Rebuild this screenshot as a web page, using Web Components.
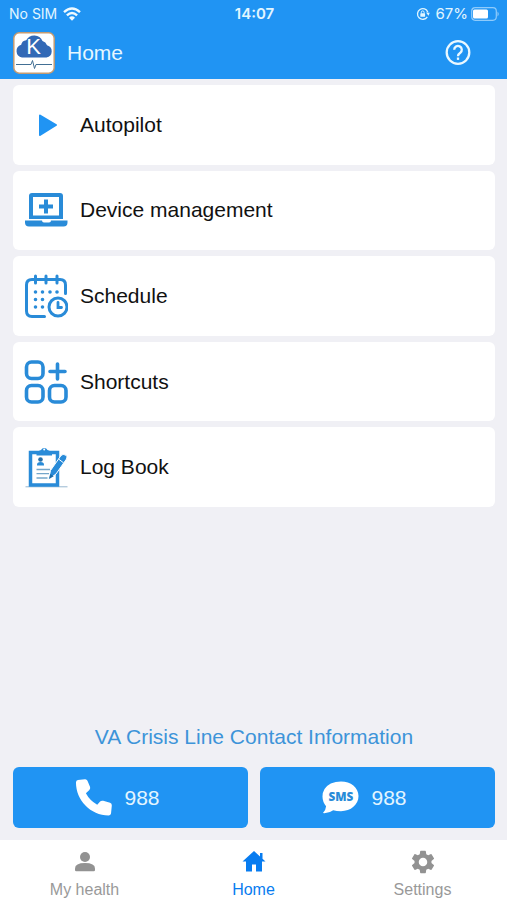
<!DOCTYPE html>
<html lang="en">
<head>
<meta charset="utf-8">
<meta name="viewport" content="width=device-width, initial-scale=1">
<title>Home</title>
<style>
html, body { margin: 0; }
body { font-family: "Liberation Sans", Arial, sans-serif; background: #f0f0f5; color: #111; }
</style>
</head>
<body>
<home-screen></home-screen>
<script>
const define = (name, html) => {
  customElements.define(name, class extends HTMLElement {
    constructor() {
      super();
      this.attachShadow({ mode: 'open' }).innerHTML = html;
    }
  });
};

define('status-bar', `
<style>
  :host { display: grid; grid-template-columns: 1fr auto 1fr; align-items: center; height: 27px; padding: 0 7px 0 9px; font: 15px/18px "Inter", "Liberation Sans", sans-serif; color: #e2f6ff; }
  div { display: flex; align-items: center; }
  .left { gap: 6px; font-size: 14px; }
  .right { justify-content: flex-end; gap: 5px; }
  .battery { gap: 3px; }
  svg { display: block; }
  time { font-weight: 600; }
</style>
<div class="left"><span>No SIM</span>
  <svg width="18" height="14" viewBox="0 0 18 14" fill="none" stroke="#effaff" stroke-width="2.4"><path d="M1 5.2Q9-2 17 5.2M3.9 8.3Q9 3.6 14.1 8.3"/><path d="M9 13.7 6 10.7Q9 8 12 10.7Z" fill="#effaff" stroke="none"/></svg>
</div>
<time>14:07</time>
<div class="right">
  <svg width="14" height="14" viewBox="0 0 14 14" fill="none" stroke="#e2f6ff" stroke-width="1.3"><path d="M11.3 9.8A5.3 5.3 0 1 1 11.8 5.2"/><path d="m10 5.6 3.700.1L12.5 8.8Z" fill="#e2f6ff" stroke="none"/><rect x="4.3" y="6.3" width="4.8" height="3.5" rx=".6" fill="#e2f6ff" stroke="none"/><path d="M5.3 6.5V5.3a1.4 1.4 0 0 1 2.8 0v1.2" stroke-width="1"/></svg>
  <div class="battery"><span>67%</span>
  <svg width="29" height="14" viewBox="0 0 29 14"><rect x=".7" y=".7" width="24.6" height="12.6" rx="3.5" fill="none" stroke="#8fcbfb" stroke-width="1.2"/><rect x="2" y="2.500" width="15" height="9" rx="1.500" fill="#fff"/><path d="M26.500 4.500q2.500 2.500 0 5Z" fill="#8fcbfb"/></svg></div>
</div>`);

define('app-header', `
<style>
  :host { display: flex; align-items: center; height: 52px; padding: 0 36px 0 13px; color: #e6f7ff; }
  h1 { flex: 1; margin: 0 0 0 12px; font-size: 21px; line-height: 24px; font-weight: 400; }
  button { padding: 0; border: 0; background: none; color: inherit; }
  svg { display: block; }
</style>
<svg width="42" height="42" viewBox="0 0 42 42" role="img" aria-label="App logo">
  <rect x=".8" y=".8" width="40.4" height="40.4" rx="5.5" fill="#fff" stroke="#c49b72" stroke-width="1.5"/>
  <path d="M9 25.500a6.600 6.600 0 0 1-.8-12.800 5.500 5.500 0 0 1 5-4.500A9 9 0 0 1 29.500 9a6.500 6.500 0 0 1 4.500 4.200A6.300 6.300 0 0 1 33.500 25.500Z" fill="#3269b6"/>
  <text x="20.5" y="22" text-anchor="middle" font-family="Liberation Sans, sans-serif" font-size="22" fill="#fff">K</text>
  <path d="M3 32.500h15l1.500-4 2 8 1.500-4h16" fill="none" stroke="#426f94" stroke-width="1"/>
</svg>
<h1>Home</h1>
<button type="button" aria-label="Help"><svg width="26" height="26" viewBox="0 0 26 26" fill="none" stroke="#eaf8ff" stroke-width="2.3"><circle cx="13" cy="12.500" r="11.300"/><path d="M9.200 9.800a3.800 3.800 0 1 1 6.100 3C13.700 13.900 13 14.500 13 16.200"/><path d="M13 17.500v2.400"/></svg></button>`);

define('menu-item', `
<style>
  :host { display: grid; }
  button { display: flex; align-items: center; gap: 12px; padding: 16px 11px; border: 0; border-radius: 6px; background: #fff; font: inherit; font-size: 21px; line-height: 24px; text-align: left; color: #111; }
  .icon { width: 44px; height: 44px; flex: none; }
</style>
<button type="button"><span class="icon"><slot name="icon"></slot></span><slot></slot></button>`);

define('contact-button', `
<style>
  :host { display: grid; }
  button { display: flex; align-items: center; justify-content: center; gap: 12px; height: 61px; padding: 0 26px 0 0; border: 0; border-radius: 6px; background: #2094f3; color: #e2f5ff; font: inherit; font-size: 21px; line-height: 24px; }
  .icon { width: 37px; height: 37px; }
</style>
<button type="button"><span class="icon"><slot name="icon"></slot></span><slot></slot></button>`);

define('tab-link', `
<style>
  :host { display: block; }
  a { display: flex; flex-direction: column; align-items: center; gap: 6px; padding-top: 9px; color: #999; text-decoration: none; font-size: 16px; line-height: 18px; }
  :host([current]) a { color: #087cf0; }
  .icon { width: 26px; height: 26px; }
</style>
<a href="#"><span class="icon"><slot name="icon"></slot></span><slot></slot></a>`);

define('home-screen', `
<style>
  :host { display: flex; flex-direction: column; min-height: 100vh; }
  .top { background: #2094f3; }
  main { flex: 1; display: flex; flex-direction: column; padding: 6px 12px 12px 13px; }
  .menu { display: grid; grid-auto-rows: 1fr; gap: 6px; min-height: 422px; }
  h2 { margin: auto 0 18px; padding-top: 24px; text-align: center; font-size: 21px; line-height: 24px; font-weight: 400; color: #3d94d9; }
  .contacts { display: grid; grid-template-columns: 1fr 1fr; gap: 12px; }
  nav { display: grid; grid-template-columns: repeat(3, 1fr); height: 60px; background: #fff; }
  svg { display: block; }
</style>
<header class="top"><status-bar></status-bar><app-header></app-header></header>
<main>
  <div class="menu">
    <menu-item><svg slot="icon" width="44" height="44" viewBox="0 0 44 44"><path d="M16 12.500 32 22 16 32Z" fill="#2094f3" stroke="#2094f3" stroke-width="2" stroke-linejoin="round"/></svg>Autopilot</menu-item>
    <menu-item><svg slot="icon" width="44" height="44" viewBox="0 0 44 44" fill="#298bd8"><path fill-rule="evenodd" d="M8 5h28q3 0 3 3v23H5V8q0-3 3-3Zm1 4v18.500h26V9Z"/><path d="M20 11.500h4v5h5v4h-5v5h-4v-5h-5v-4h5ZM1 32.500h17q0 2 2 2h5q2 0 2-2h16.500v2q0 4-4 4H5q-4 0-4-4Z"/></svg>Device management</menu-item>
    <menu-item><svg slot="icon" width="44" height="44" viewBox="0 0 44 44" fill="none" stroke="#298bd8" stroke-width="3" stroke-linecap="round"><path d="M20.500 42.500H8q-5.500 0-5.500-5.500V11Q2.500 5.500 8 5.500h28q5.500 0 5.500 5.500v8.500" /><path d="M11.500 2v7M22 2v7M33 2v7"/><path d="M11.500 18h.01M18.500 18h.01M26 18h.01M33 18h.01M11.500 25.500h.01M18.500 25.500h.01M11.500 33h.01M18.500 33h.01" stroke-width="3.600"/><circle cx="34" cy="33" r="9" fill="#fff"/><path d="M34 28.500v5h3.500" stroke-width="2.800"/></svg>Schedule</menu-item>
    <menu-item><svg slot="icon" width="44" height="44" viewBox="0 0 44 44" fill="none" stroke="#298bd8" stroke-width="3.600" stroke-linecap="round"><rect x="2.500" y="2" width="16.500" height="16.500" rx="5"/><rect x="2.500" y="25.500" width="16.500" height="16.500" rx="5"/><rect x="25.500" y="25.500" width="16.500" height="16.500" rx="5"/><path d="M33.500 4v15M26 11.500h15"/></svg>Shortcuts</menu-item>
    <menu-item><svg slot="icon" width="44" height="44" viewBox="0 0 44 44"><path d="M1.500 41.800h42" stroke="#98b7d0" stroke-width="1"/><path d="M6.500 7.500h27v32.500h-27Z" fill="#fff" stroke="#298bd8" stroke-width="3.500"/><path d="M12.500 10.500V7l4.500-2a3.700 3.700 0 0 1 6.500 0l4.500 2v3.500Z" fill="#298bd8"/><circle cx="20.200" cy="4.600" r="1" fill="#fff"/><circle cx="16.500" cy="14.500" r="2.300" fill="#246fa9"/><path d="M13 20.500v-1q0-2.500 3.500-2.500t3.500 2.500v1Z" fill="#298bd8"/><path d="M12.500 24.500H26M12.500 28.700H25M12.500 33h11" stroke="#74a6ca" stroke-width="1.300"/><path d="m24.500 34.500 2-9L37 10.500q2-2 4.500-.5t1 4L32 29Z" fill="#298bd8" stroke="#fff" stroke-width="1"/><path d="m34.500 14 5 3.800" stroke="#fff" stroke-width="1"/><path d="m25 34 1.200-5 3.500 2.300Z" fill="#1d6da8"/></svg>Log Book</menu-item>
  </div>
  <h2>VA Crisis Line Contact Information</h2>
  <div class="contacts">
    <contact-button><svg slot="icon" width="37" height="37" viewBox="0 0 38 38"><path d="M3 1 10.200.2Q12 0 12.800 1.800L15.500 8.200Q16 10 14.500 11.500L11.200 14.700Q15 22 22.800 26.500L25.800 23.200Q27 21.800 29 22.400L36 24.500Q38 25.200 37.800 27.200L37 35.500Q36.500 37.500 34.500 37.500C16 37 1 22 1 3.500Q1 1.300 3 1Z" fill="#fff"/></svg>988</contact-button>
    <contact-button><svg slot="icon" width="37" height="37" viewBox="0 0 38 38"><path d="M19.500 2.500C29.500 2.500 37.500 8.500 37.500 17.500S29.500 33 19.500 33Q15 33 11.500 32 7 35.500 1 35 4 31.500 4.200 28 .5 23.500.5 18 .5 9 9 4.500 14 2.500 19.500 2.500Z" fill="#fff"/><text x="19.500" y="22.500" text-anchor="middle" font-family="Open Sans, sans-serif" font-weight="800" font-size="12" fill="#298bd8">SMS</text></svg>988</contact-button>
  </div>
</main>
<nav aria-label="Main">
  <tab-link><svg slot="icon" width="26" height="26" viewBox="0 0 26 26" fill="#929292"><circle cx="13" cy="8" r="5"/><path d="M3 21v-1.500Q3 14 13 14t10 5.500V21q0 1.300-1.300 1.300H4.300Q3 22.300 3 21Z"/></svg>My health</tab-link>
  <tab-link current><svg slot="icon" width="26" height="26" viewBox="0 0 26 26" fill="#087cf0"><path d="M13 2 1.500 12.500H5V22.500h6v-7h4v7h6v-10h3.500L21.500 9.700V4h-2.500v3.500Z"/></svg>Home</tab-link>
  <tab-link><svg slot="icon" width="26" height="26" viewBox="1 1 22 22" fill="#929292"><path d="M19.140 12.940c.04-.3.060-.610.060-.940s-.020-.640-.070-.940l2.030-1.580a.490.490 0 0 0 .120-.610l-1.920-3.320a.488.488 0 0 0-.590-.220l-2.390.960c-.500-.380-1.030-.700-1.620-.940l-.360-2.540a.484.484 0 0 0-.480-.410h-3.840c-.240 0-.430.170-.470.410l-.360 2.540c-.590.240-1.130.570-1.620.940l-2.390-.960c-.220-.080-.470 0-.590.220L2.740 8.870c-.120.210-.080.470.120.610l2.030 1.580c-.050.300-.090.630-.090.940s.020.640.070.940l-2.030 1.580a.490.490 0 0 0-.120.610l1.920 3.320c.120.220.370.290.590.220l2.390-.960c.500.380 1.030.700 1.620.940l.360 2.540c.050.240.240.410.480.410h3.840c.240 0 .440-.170.470-.410l.360-2.540c.590-.240 1.130-.560 1.620-.940l2.390.960c.220.080.470 0 .590-.220l1.920-3.320a.490.490 0 0 0-.120-.610l-2.010-1.580ZM12 15.600A3.600 3.600 0 1 1 12 8.400a3.600 3.600 0 0 1 0 7.200Z"/></svg>Settings</tab-link>
</nav>`);
</script>
</body>
</html>
